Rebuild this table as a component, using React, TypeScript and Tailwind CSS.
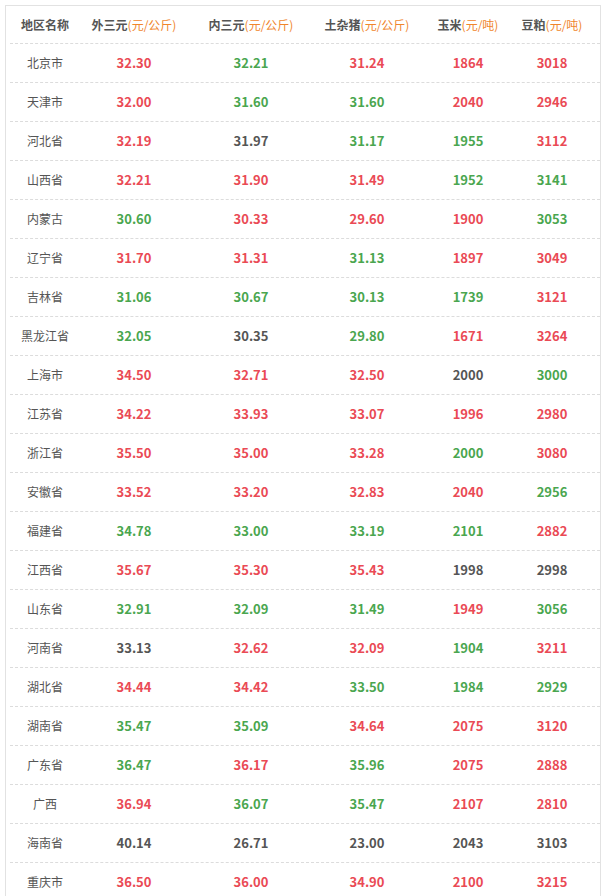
type Tone = 'r' | 'g' | 'd';

const rows: [string, [string, Tone][]][] = [
  ['北京市', [['32.30', 'r'], ['32.21', 'g'], ['31.24', 'r'], ['1864', 'r'], ['3018', 'r']]],
  ['天津市', [['32.00', 'r'], ['31.60', 'g'], ['31.60', 'g'], ['2040', 'r'], ['2946', 'r']]],
  ['河北省', [['32.19', 'r'], ['31.97', 'd'], ['31.17', 'g'], ['1955', 'g'], ['3112', 'r']]],
  ['山西省', [['32.21', 'r'], ['31.90', 'r'], ['31.49', 'r'], ['1952', 'g'], ['3141', 'g']]],
  ['内蒙古', [['30.60', 'g'], ['30.33', 'r'], ['29.60', 'r'], ['1900', 'r'], ['3053', 'g']]],
  ['辽宁省', [['31.70', 'r'], ['31.31', 'r'], ['31.13', 'g'], ['1897', 'r'], ['3049', 'r']]],
  ['吉林省', [['31.06', 'g'], ['30.67', 'g'], ['30.13', 'g'], ['1739', 'g'], ['3121', 'r']]],
  ['黑龙江省', [['32.05', 'g'], ['30.35', 'd'], ['29.80', 'g'], ['1671', 'r'], ['3264', 'r']]],
  ['上海市', [['34.50', 'r'], ['32.71', 'r'], ['32.50', 'r'], ['2000', 'd'], ['3000', 'g']]],
  ['江苏省', [['34.22', 'r'], ['33.93', 'r'], ['33.07', 'r'], ['1996', 'r'], ['2980', 'r']]],
  ['浙江省', [['35.50', 'r'], ['35.00', 'r'], ['33.28', 'r'], ['2000', 'g'], ['3080', 'r']]],
  ['安徽省', [['33.52', 'r'], ['33.20', 'r'], ['32.83', 'r'], ['2040', 'r'], ['2956', 'g']]],
  ['福建省', [['34.78', 'g'], ['33.00', 'g'], ['33.19', 'g'], ['2101', 'g'], ['2882', 'r']]],
  ['江西省', [['35.67', 'r'], ['35.30', 'r'], ['35.43', 'r'], ['1998', 'd'], ['2998', 'd']]],
  ['山东省', [['32.91', 'g'], ['32.09', 'g'], ['31.49', 'g'], ['1949', 'r'], ['3056', 'g']]],
  ['河南省', [['33.13', 'd'], ['32.62', 'r'], ['32.09', 'r'], ['1904', 'g'], ['3211', 'r']]],
  ['湖北省', [['34.44', 'r'], ['34.42', 'r'], ['33.50', 'g'], ['1984', 'g'], ['2929', 'g']]],
  ['湖南省', [['35.47', 'g'], ['35.09', 'g'], ['34.64', 'r'], ['2075', 'r'], ['3120', 'r']]],
  ['广东省', [['36.47', 'g'], ['36.17', 'r'], ['35.96', 'g'], ['2075', 'r'], ['2888', 'r']]],
  ['广西', [['36.94', 'r'], ['36.07', 'g'], ['35.47', 'g'], ['2107', 'r'], ['2810', 'r']]],
  ['海南省', [['40.14', 'd'], ['26.71', 'd'], ['23.00', 'd'], ['2043', 'd'], ['3103', 'd']]],
  ['重庆市', [['36.50', 'r'], ['36.00', 'r'], ['34.90', 'r'], ['2100', 'r'], ['3215', 'r']]],
];

const toneClass: Record<Tone, string> = {
  r: 'text-[#ea4a55]',
  g: 'text-[#4aa64f]',
  d: 'text-[#555555]',
};

const headers: [string, string][] = [
  ['外三元', '(元/公斤)'],
  ['内三元', '(元/公斤)'],
  ['土杂猪', '(元/公斤)'],
  ['玉米', '(元/吨)'],
  ['豆粕', '(元/吨)'],
];

const grid = 'grid grid-cols-[70px_108px_126px_106px_96px_72px] items-center border-b border-dashed border-[#dcdcdc]';

export default function App() {
  return (
    <div className="min-h-screen bg-white pt-[5px] pl-[5px] font-['Noto_Sans_CJK_SC',sans-serif]">
      <div className="w-[596px] border border-b-0 border-[#e2e2e2] pl-[4px]">
        <div className={`${grid} h-[38px] text-[12px]`}>
          <div className="text-center font-bold text-[#555]">地区名称</div>
          {headers.map(([name, unit]) => (
            <div key={name} className="text-center font-bold text-[#555]">
              {name}
              <span className="font-normal text-[#f0852c]">{unit}</span>
            </div>
          ))}
        </div>
        {rows.map(([region, cells]) => (
          <div key={region} className={`${grid} h-[39px]`}>
            <div className="text-center text-[12px] text-[#555]">{region}</div>
            {cells.map(([value, tone], i) => (
              <div key={i} className={`text-center text-[13px] font-bold ${toneClass[tone]}`}>
                {value}
              </div>
            ))}
          </div>
        ))}
      </div>
    </div>
  );
}
